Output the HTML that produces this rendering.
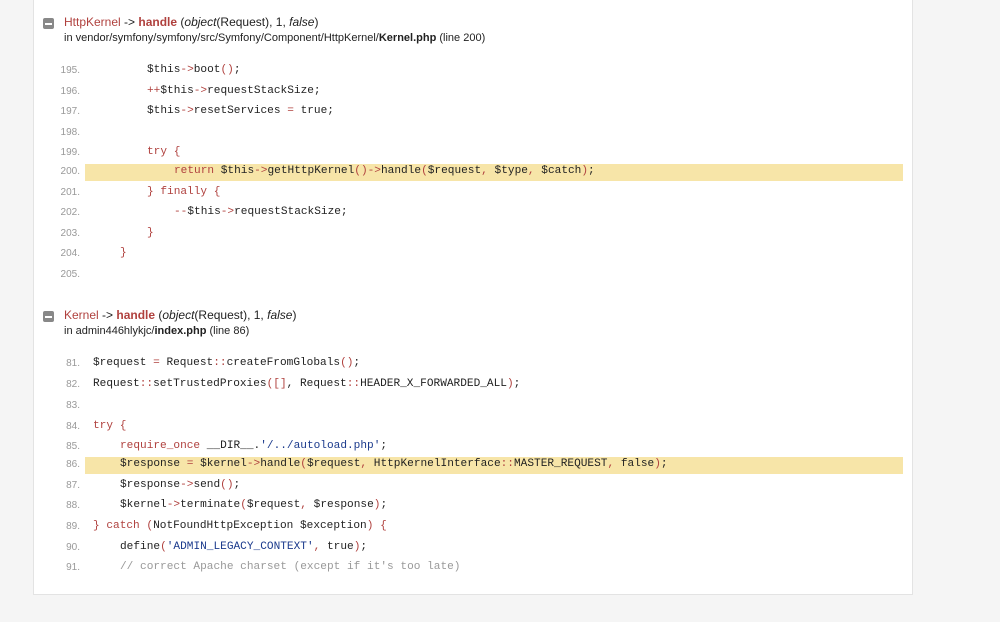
<!DOCTYPE html>
<html><head><meta charset="utf-8"><style>
*{margin:0;padding:0;box-sizing:border-box}
body{width:1000px;height:622px;background:#f5f5f5;position:relative;overflow:hidden;font-family:"Liberation Sans",Arial,sans-serif}
.panel{position:absolute;left:33px;top:-2px;width:880px;height:597px;background:#fff;border:1px solid #e3e3e3}
.ic{position:absolute;width:11px;height:11px;background:#888;border-radius:2px}
.ic:after{content:"";position:absolute;left:2px;right:2px;top:4.5px;height:2px;background:#fff}
.t{position:absolute;font-size:12px;color:#222;white-space:nowrap}
.r{color:#b0413e}
.s{position:absolute;font-size:11px;color:#222;white-space:nowrap}
.n{position:absolute;font-family:"Liberation Sans",sans-serif;font-size:10px;color:#999;width:80px;text-align:right;left:0}
.c{position:absolute;font-family:"Liberation Mono",monospace;font-size:11.13px;color:#222;white-space:pre}
.hl{position:absolute;left:85px;width:818px;height:17px;background:#f7e5a8}
.k{color:#b0413e}.q{color:#1b3a8c}.g{color:#999}
</style></head><body>
<div class="panel"></div>
<div class="ic" style="left:43px;top:18px"></div>
<div class="t" style="left:64px;top:15px"><span class="r">HttpKernel</span> -&gt; <b class="r">handle</b> (<i>object</i>(Request), 1, <i>false</i>)</div>
<div class="s" style="left:64px;top:32px">in vendor/symfony/symfony/src/Symfony/Component/HttpKernel/<b>Kernel.php</b> (line 200)</div>

<div class="hl" style="top:164px"></div>
<div class="n" style="top:65px">195.</div><div class="c" style="left:147px;top:64px">$this<span class="k">-&gt;</span>boot<span class="k">()</span>;</div>
<div class="n" style="top:86px">196.</div><div class="c" style="left:147px;top:85px"><span class="k">++</span>$this<span class="k">-&gt;</span>requestStackSize;</div>
<div class="n" style="top:106px">197.</div><div class="c" style="left:147px;top:105px">$this<span class="k">-&gt;</span>resetServices <span class="k">=</span> true;</div>
<div class="n" style="top:127px">198.</div>
<div class="n" style="top:147px">199.</div><div class="c" style="left:147px;top:146px"><span class="k">try {</span></div>
<div class="n" style="top:166px">200.</div><div class="c" style="left:174px;top:165px"><span class="k">return</span> $this<span class="k">-&gt;</span>getHttpKernel<span class="k">()-&gt;</span>handle<span class="k">(</span>$request<span class="k">,</span> $type<span class="k">,</span> $catch<span class="k">)</span>;</div>
<div class="n" style="top:187px">201.</div><div class="c" style="left:147px;top:186px"><span class="k">} finally {</span></div>
<div class="n" style="top:207px">202.</div><div class="c" style="left:174px;top:206px"><span class="k">--</span>$this<span class="k">-&gt;</span>requestStackSize;</div>
<div class="n" style="top:228px">203.</div><div class="c" style="left:147px;top:227px"><span class="k">}</span></div>
<div class="n" style="top:248px">204.</div><div class="c" style="left:120px;top:247px"><span class="k">}</span></div>
<div class="n" style="top:269px">205.</div>

<div class="ic" style="left:43px;top:311px"></div>
<div class="t" style="left:64px;top:308px"><span class="r">Kernel</span> -&gt; <b class="r">handle</b> (<i>object</i>(Request), 1, <i>false</i>)</div>
<div class="s" style="left:64px;top:325px">in admin446hlykjc/<b>index.php</b> (line 86)</div>

<div class="hl" style="top:457px"></div>
<div class="n" style="top:358px">81.</div><div class="c" style="left:93px;top:357px">$request <span class="k">=</span> Request<span class="k">::</span>createFromGlobals<span class="k">()</span>;</div>
<div class="n" style="top:379px">82.</div><div class="c" style="left:93px;top:378px">Request<span class="k">::</span>setTrustedProxies<span class="k">([]</span>, Request<span class="k">::</span>HEADER_X_FORWARDED_ALL<span class="k">)</span>;</div>
<div class="n" style="top:400px">83.</div>
<div class="n" style="top:421px">84.</div><div class="c" style="left:93px;top:420px"><span class="k">try {</span></div>
<div class="n" style="top:441px">85.</div><div class="c" style="left:120px;top:440px"><span class="k">require_once</span> __DIR__.<span class="q">'/../autoload.php'</span>;</div>
<div class="n" style="top:459px">86.</div><div class="c" style="left:120px;top:458px">$response <span class="k">=</span> $kernel<span class="k">-&gt;</span>handle<span class="k">(</span>$request<span class="k">,</span> HttpKernelInterface<span class="k">::</span>MASTER_REQUEST<span class="k">,</span> false<span class="k">)</span>;</div>
<div class="n" style="top:480px">87.</div><div class="c" style="left:120px;top:479px">$response<span class="k">-&gt;</span>send<span class="k">()</span>;</div>
<div class="n" style="top:500px">88.</div><div class="c" style="left:120px;top:499px">$kernel<span class="k">-&gt;</span>terminate<span class="k">(</span>$request<span class="k">,</span> $response<span class="k">)</span>;</div>
<div class="n" style="top:521px">89.</div><div class="c" style="left:93px;top:520px"><span class="k">} catch (</span>NotFoundHttpException $exception<span class="k">) {</span></div>
<div class="n" style="top:542px">90.</div><div class="c" style="left:120px;top:541px">define<span class="k">(</span><span class="q">'ADMIN_LEGACY_CONTEXT'</span><span class="k">,</span> true<span class="k">)</span>;</div>
<div class="n" style="top:562px">91.</div><div class="c g" style="left:120px;top:561px">// correct Apache charset (except if it's too late)</div>
</body></html>
